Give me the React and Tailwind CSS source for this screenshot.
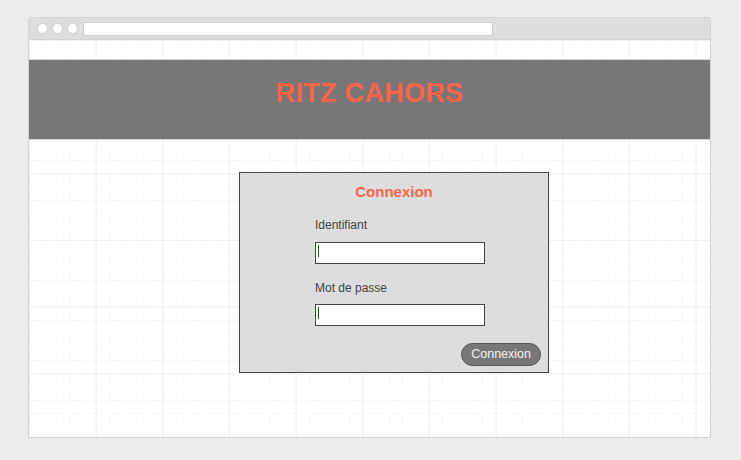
import React from "react";

export default function App() {
  return (
    <div className="w-[741px] h-[460px] bg-[#ececec] pt-[17px] pl-[28px] font-['Liberation_Sans',Arial,sans-serif]">
      <div className="w-[683px] h-[421px] border border-[#d2d2d2] rounded-t-[3px] flex flex-col overflow-hidden">
        {/* browser bar */}
        <div className="h-[22px] bg-[#dddddd] flex items-center pl-[8px] gap-[4px] border-b border-[#d2d2d2]">
          <span className="w-[11px] h-[11px] rounded-full bg-white border border-[#cfcfcf]" />
          <span className="w-[11px] h-[11px] rounded-full bg-white border border-[#cfcfcf]" />
          <span className="w-[11px] h-[11px] rounded-full bg-white border border-[#cfcfcf]" />
          <div className="ml-[1px] w-[410px] h-[14px] bg-white border border-[#cfcfcf] rounded-[3px]" />
        </div>

        {/* page */}
        <div className="flex-1 bg-white bg-[linear-gradient(to_right,#f0f0f0_1px,transparent_1px),linear-gradient(to_bottom,#f0f0f0_1px,transparent_1px),linear-gradient(to_right,#f7f7f7_1px,transparent_1px),linear-gradient(to_bottom,#f7f7f7_1px,transparent_1px)] bg-[size:66.67px_66.67px,66.67px_66.67px,13.333px_13.333px,13.333px_13.333px] pt-[19px]">
          <div className="h-[81px] bg-[#777777] border-y border-[#d8d8d8] flex items-center justify-center">
            <h1 className="text-[#ff6347] text-[27px] font-bold tracking-[0.3px] -mt-[12px]">RITZ CAHORS</h1>
          </div>

          <div className="flex pt-[32px] pl-[210px]">
            <div className="w-[310px] h-[201px] bg-[#dddddd] border border-[#444444] flex flex-col">
              <h2 className="text-[#ff6347] text-[15px] font-bold text-center mt-[8px]">Connexion</h2>
              <div className="pl-[75px] mt-[14px] flex flex-col">
                <label className="text-[12px] text-[#444444] leading-[14px]">Identifiant</label>
                <div className="mt-[10px] w-[170px] h-[22px] bg-white border border-[#444444] relative">
                  <span className="absolute left-[2px] top-[2px] w-px h-[12px] bg-[#2f4f2f]" />
                </div>
                <label className="text-[12px] text-[#444444] leading-[14px] mt-[17px]">Mot de passe</label>
                <div className="mt-[9px] w-[170px] h-[22px] bg-white border border-[#444444] relative">
                  <span className="absolute left-[2px] top-[2px] w-px h-[12px] bg-[#2f4f2f]" />
                </div>
              </div>
              <div className="flex justify-end pr-[7px] mt-[17px]">
                <button className="h-[23px] px-[9px] rounded-full bg-[#777777] border border-[#555555] text-[#f2f2f2] text-[12.5px] leading-none">
                  Connexion
                </button>
              </div>
            </div>
          </div>
        </div>
      </div>
    </div>
  );
}
